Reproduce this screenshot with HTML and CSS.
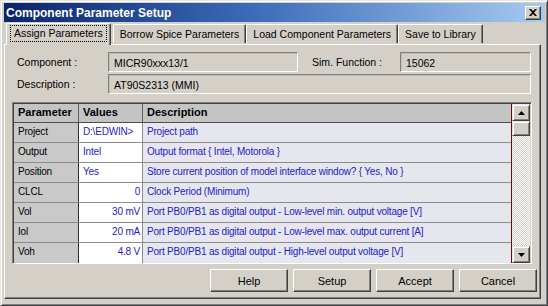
FILE: index.html
```html
<!DOCTYPE html>
<html lang="en">

<head>
  <meta charset="UTF-8" />
  <title>Component Parameter Setup</title>
  <link rel="stylesheet" href="styles.css">
</head>

<body>
  <div class="window">
    <div class="titlebar">
      <span class="title">Component Parameter Setup</span>
      <span class="close">
        <svg width="8" height="7" viewBox="0 0 8 7"><path d="M0 0h2l2 2 2-2h2L5 3.5 8 7H6L4 5 2 7H0l3-3.5z" fill="#000"/></svg>
      </span>
    </div>

    <div class="tabs">
      <div class="tab active"><span class="focus">Assign Parameters</span></div>
      <div class="tab">Borrow Spice Parameters</div>
      <div class="tab">Load Component Parameters</div>
      <div class="tab">Save to Library</div>
    </div>

    <div class="panel">
      <div class="field-row">
        <label class="label">Component :</label>
        <div class="box box-comp">MICR90xxx13/1</div>
        <label class="label label-sim">Sim. Function :</label>
        <div class="box box-sim">15062</div>
      </div>
      <div class="field-row">
        <label class="label">Description :</label>
        <div class="box box-desc">AT90S2313 (MMI)</div>
      </div>

      <div class="grid-wrap">
        <div class="grid">
          <div class="row head">
            <div class="cell">Parameter</div>
            <div class="cell">Values</div>
            <div class="cell">Description</div>
          </div>
          <div class="row">
            <div class="cell name">Project</div>
            <div class="cell val">D:\EDWIN&gt;</div>
            <div class="cell desc">Project path</div>
          </div>
          <div class="row">
            <div class="cell name">Output</div>
            <div class="cell val">Intel</div>
            <div class="cell desc">Output format { Intel, Motorola }</div>
          </div>
          <div class="row">
            <div class="cell name">Position</div>
            <div class="cell val">Yes</div>
            <div class="cell desc">Store current position of model interface window? { Yes, No }</div>
          </div>
          <div class="row">
            <div class="cell name">CLCL</div>
            <div class="cell val num">0</div>
            <div class="cell desc">Clock Period (Minimum)</div>
          </div>
          <div class="row">
            <div class="cell name">Vol</div>
            <div class="cell val num">30 mV</div>
            <div class="cell desc">Port PB0/PB1 as digital output - Low-level min. output voltage [V]</div>
          </div>
          <div class="row">
            <div class="cell name">Iol</div>
            <div class="cell val num">20 mA</div>
            <div class="cell desc">Port PB0/PB1 as digital output - Low-level max. output current [A]</div>
          </div>
          <div class="row">
            <div class="cell name">Voh</div>
            <div class="cell val num">4.8 V</div>
            <div class="cell desc">Port PB0/PB1 as digital output - High-level output voltage [V]</div>
          </div>
        </div>
        <div class="scrollbar">
          <div class="sb-btn">
            <svg width="7" height="4" viewBox="0 0 7 4"><path d="M3.5 0L7 4H0z" fill="#000"/></svg>
          </div>
          <div class="sb-thumb"></div>
          <div class="sb-track"></div>
          <div class="sb-btn">
            <svg width="7" height="4" viewBox="0 0 7 4"><path d="M0 0h7L3.5 4z" fill="#000"/></svg>
          </div>
        </div>
      </div>

      <div class="buttons">
        <button class="btn">Help</button>
        <button class="btn">Setup</button>
        <button class="btn">Accept</button>
        <button class="btn">Cancel</button>
      </div>
    </div>
  </div>
</body>

</html>
```

FILE: styles.css
```css
body {
  margin: 0;
  font-family: 'Liberation Sans', Arial, sans-serif;
  font-size: 10.5px;
  color: #000;
  background: #d4d0c8;
}

.window {
  width: 548px;
  height: 306px;
  box-sizing: border-box;
  background: #d4d0c8;
  border: 1px solid;
  border-color: #e8e6e0 #404040 #404040 #e8e6e0;
  box-shadow: inset 1px 1px #fff, inset -1px -1px #808080;
  padding: 2px 2px 6px 3px;
  display: flex;
  flex-direction: column;
}

.titlebar {
  height: 19px;
  flex: none;
  display: flex;
  align-items: center;
  justify-content: space-between;
  padding: 0 4px 0 2px;
  background: linear-gradient(to right, #0a246a, #3a6ab8 45%, #a6caf0);
}

.title {
  color: #fff;
  font-weight: bold;
  font-size: 12px;
}

.close {
  width: 16px;
  height: 14px;
  box-sizing: border-box;
  background: #d4d0c8;
  border: 1px solid;
  border-color: #fff #404040 #404040 #fff;
  box-shadow: inset -1px -1px #808080;
  display: flex;
  align-items: center;
  justify-content: center;
}

/* tabs */
.tabs {
  display: flex;
  align-items: flex-end;
  height: 22px;
  padding-left: 2px;
  flex: none;
  position: relative;
  z-index: 1;
}

.tab {
  height: 19px;
  box-sizing: border-box;
  padding: 0 6px;
  line-height: 18px;
  border: 1px solid;
  border-bottom: none;
  border-color: #fff #404040 #fff #fff;
  box-shadow: inset -1px 0 #808080;
  border-radius: 2px 2px 0 0;
  background: #d4d0c8;
  white-space: nowrap;
  margin-bottom: 1px;
}

.tab.active {
  height: 22px;
  margin-bottom: -1px;
  margin-right: 2px;
  padding: 2px 4px 0;
  line-height: 15px;
}

.focus {
  display: inline-block;
  padding: 0 3px;
  outline: 1px dotted #000;
}

.panel {
  flex: 1;
  margin-right: 4px;
  border: 1px solid;
  border-color: #fff #404040 #404040 #fff;
  box-shadow: inset -1px -1px #808080;
  padding: 7px 3px 6px 12px;
  display: flex;
  flex-direction: column;
}

/* fields */
.field-row {
  display: flex;
  align-items: center;
  height: 20px;
  margin-bottom: 2px;
}

.label {
  width: 91px;
  flex: none;
}

.label-sim {
  margin-left: 14px;
  width: 88px;
}

.box {
  height: 20px;
  box-sizing: border-box;
  padding: 4px 0 0 5px;
  border: 1px solid;
  border-color: #808080 #fff #fff #808080;
  box-shadow: inset 1px 1px #c0bcb4;
  background: #d4d0c8;
  white-space: nowrap;
}

.box-comp {
  width: 190px;
}

.box-sim {
  width: 131px;
}

.box-desc {
  width: 423px;
}

/* parameter grid */
.grid-wrap {
  margin-top: 6px;
  margin-left: -5px;
  width: 520px;
  box-sizing: border-box;
  border: 1px solid;
  border-color: #808080 #fff #fff #808080;
  box-shadow: inset 1px 1px #404040;
  padding: 1px 0 0 1px;
  display: flex;
}

.grid {
  width: 497px;
  border-right: 1px solid #5a1010;
  font-size: 10px;
  letter-spacing: -0.2px;
}

.row {
  display: grid;
  grid-template-columns: 65px 64px 1fr;
  height: 20px;
  box-sizing: border-box;
  border-bottom: 1px solid #8c8c8c;
}

.row:last-child {
  border-bottom: none;
}

.cell {
  padding: 3px 3px 0 4px;
  border-right: 1px solid #8c8c8c;
  white-space: nowrap;
  overflow: hidden;
}

.cell:last-child {
  border-right: none;
}

.head {
  height: 19px;
  background: #c4c4c4;
  border-bottom: 1px solid #505050;
  font-weight: bold;
  font-size: 11px;
  letter-spacing: 0;
}

.head .cell {
  padding-top: 2px;
  border-right-color: #606060;
}

.name {
  background: #c9c9c9;
  border-right-color: #303030;
}

.val {
  background: #fff;
  color: #2222cc;
}

.num {
  text-align: right;
  padding-right: 2px;
}

.desc {
  background: #e6e6ee;
  color: #2222cc;
}

/* scrollbar */
.scrollbar {
  width: 18px;
  display: flex;
  flex-direction: column;
}

.sb-btn,
.sb-thumb {
  height: 17px;
  box-sizing: border-box;
  background: #d4d0c8;
  border: 1px solid;
  border-color: #e8e6e0 #404040 #404040 #e8e6e0;
  box-shadow: inset 1px 1px #fff, inset -1px -1px #808080;
  display: flex;
  align-items: center;
  justify-content: center;
}

.sb-thumb {
  height: 15px;
}

.sb-track {
  flex: 1;
  background: repeating-conic-gradient(#d4d0c8 0 25%, #fff 0 50%) 0 0 / 2px 2px;
}

/* buttons */
.buttons {
  margin-top: auto;
  display: flex;
  justify-content: flex-end;
  gap: 5px;
}

.btn {
  width: 78px;
  height: 23px;
  font-family: inherit;
  font-size: 11px;
  color: #000;
  background: #d4d0c8;
  border: 1px solid;
  border-color: #fff #404040 #404040 #fff;
  box-shadow: inset -1px -1px #808080;
  padding: 0;
}
```
